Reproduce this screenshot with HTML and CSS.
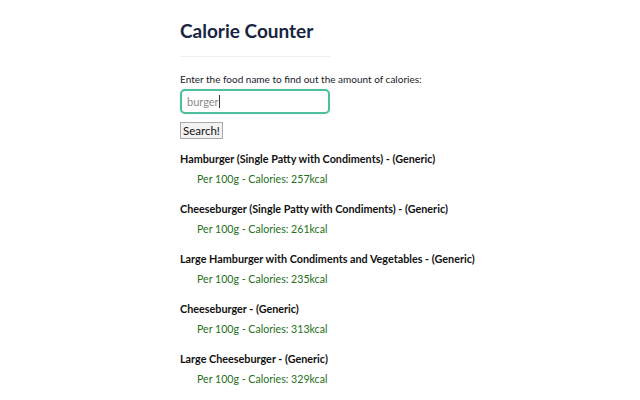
FILE: index.html
```html
<!DOCTYPE html>
<html lang="en">
	<head>
		<meta charset="UTF-8" />
		<meta name="viewport" content="width=device-width, initial-scale=1.0" />
		<title>Calorie Counter</title>
		<link rel="stylesheet" href="styles.css">
	</head>
	<body>
		<div class="app">
			<h1 class="title">Calorie Counter</h1>
			<hr class="rule" />
			<form id="searchForm" class="search">
				<label for="food">Enter the food name to find out the amount of calories:</label>
				<div class="field"><span class="typed">burger</span><span class="caret"></span></div>
				<button type="submit">Search!</button>
			</form>
			<ul id="results" class="results">
				<li>
					<span class="name">Hamburger (Single Patty with Condiments) - (Generic)</span>
					<span class="cal">Per 100g - Calories: 257kcal</span>
				</li>
				<li>
					<span class="name">Cheeseburger (Single Patty with Condiments) - (Generic)</span>
					<span class="cal">Per 100g - Calories: 261kcal</span>
				</li>
				<li>
					<span class="name">Large Hamburger with Condiments and Vegetables - (Generic)</span>
					<span class="cal">Per 100g - Calories: 235kcal</span>
				</li>
				<li>
					<span class="name">Cheeseburger - (Generic)</span>
					<span class="cal">Per 100g - Calories: 313kcal</span>
				</li>
				<li>
					<span class="name">Large Cheeseburger - (Generic)</span>
					<span class="cal">Per 100g - Calories: 329kcal</span>
				</li>
			</ul>
		</div>
	</body>
</html>
```

FILE: styles.css
```css
body {
	margin: 0;
	background: #fff;
	font-family: Lato, 'Open Sans', sans-serif;
	color: #111;
}

.app {
	width: 320px;
	margin: 0 0 0 180px;
	padding-top: 19px;
}

.title {
	margin: 0;
	font-size: 19px;
	font-weight: 700;
	line-height: 24px;
	color: #172542;
}
.rule {
	width: 150px;
	margin: 13px 0 0;
	border: none;
	border-top: 1px solid #eee;
}

.search {
	display: flex;
	flex-direction: column;
	align-items: flex-start;
	margin-top: 15px;
}
.search label {
	font-size: 10px;
	line-height: 14px;
	color: #1a1a2a;
}
.field {
	display: flex;
	align-items: center;
	width: 150px;
	height: 25px;
	box-sizing: border-box;
	margin-top: 3px;
	padding: 0 5px;
	border: 2px solid #4cbf9f;
	border-radius: 5px;
	box-shadow: 0 0 1px #8fd8c4;
	font-size: 11px;
	color: #8a8a8a;
}
.caret {
	width: 1px;
	height: 13px;
	background: #333;
}
.search button {
	margin-top: 8px;
	height: 17px;
	padding: 0 2px;
	font-family: inherit;
	font-size: 11.5px;
	line-height: 15px;
	color: #111;
	background: #f2f2f2;
	border: 1px solid #a9a9a9;
	border-radius: 0;
}

.results {
	list-style-type: none;
	margin: 13px 0 0;
	padding: 0;
}
.results > li {
	display: flex;
	flex-direction: column;
	height: 50px;
}
.name {
	font-size: 10.8px;
	font-weight: 700;
	line-height: 14px;
}
.cal {
	margin-top: 6px;
	padding-left: 17px;
	font-size: 10.6px;
	line-height: 14px;
	color: #25701a;
}
```
